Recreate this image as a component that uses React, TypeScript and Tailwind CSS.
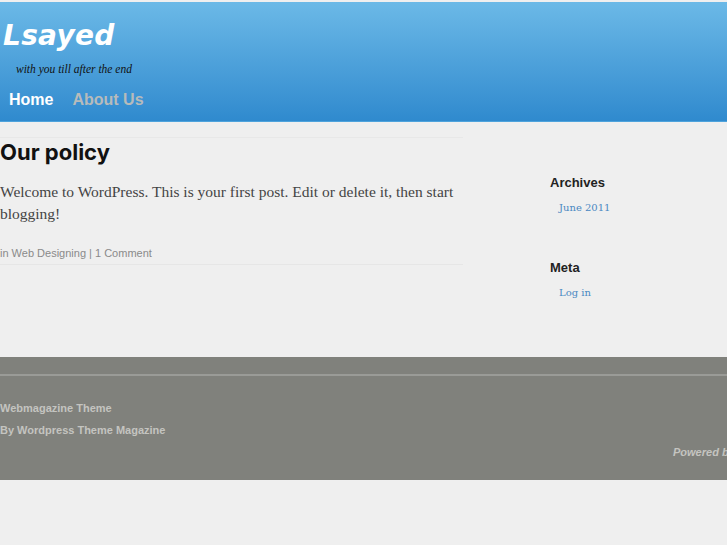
import React from 'react';

const sans = { fontFamily: '"Liberation Sans", Arial, sans-serif' };

const App: React.FC = () => {
  return (
    <div className="min-h-[545px] bg-[#efefef] overflow-hidden font-['Liberation_Sans',Arial,sans-serif]">
      {/* Header */}
      <div className="pt-[2px]">
        <div className="h-[120px] bg-gradient-to-b from-[#6bb9e7] to-[#2f8ace] border-b border-[#4ea3dc] relative">
          <div className="pl-[3px] pt-[20px] leading-none">
            <h1 className="text-[28px] font-bold italic text-white tracking-[0.3px] font-['DejaVu_Sans',sans-serif]">Lsayed</h1>
          </div>
          <div className="pl-[16px] pt-[14px] text-[11.5px] italic text-[#111] font-['Liberation_Serif',serif] leading-none">
            with you till after the end
          </div>
          <nav className="flex gap-[19px] pl-[9px] pt-[16px] text-[16px] font-bold leading-none">
            <span className="text-white">Home</span>
            <span className="text-[#b7bbbb]">About Us</span>
          </nav>
        </div>
      </div>

      {/* Content */}
      <div className="flex mt-[15px]">
        <div className="w-[463px] border-t border-[#e8e8e8]">
          <h2 className="text-[22px] font-bold text-[#111] mt-[1px] leading-[26px] font-['Inter',sans-serif]">Our policy</h2>
          <p className="mt-[16px] text-[15.5px] leading-[22px] text-[#444] font-['Liberation_Serif',serif]">
            Welcome to WordPress. This is your first post. Edit or delete it, then start blogging!
          </p>
          <div className="mt-[20px] pb-[2px] text-[11px] text-[#8a8a8a] border-b border-[#e6e6e6]" style={sans}>
            in Web Designing | 1 Comment
          </div>
        </div>
        <div className="ml-[88px] pt-[38px]">
          <h3 className="-ml-px text-[13px] font-bold text-[#222] leading-4">Archives</h3>
          <div className="pl-[8px] mt-[9px] text-[10px] text-[#4a88c2] font-['DejaVu_Serif',serif]">June 2011</div>
          <h3 className="-ml-px mt-[45px] text-[13px] font-bold text-[#222] leading-4">Meta</h3>
          <div className="pl-[8px] mt-[9px] text-[10px] text-[#4a88c2] font-['DejaVu_Serif',serif]">Log in</div>
        </div>
      </div>

      {/* Footer */}
      <div className="mt-[57px] bg-[#80817c] h-[123px]">
        <div className="h-[19px] border-b-2 border-[#9a9b97]" />
        <div className="pt-[21px] text-[11px] font-bold text-[#c4c4c0] leading-[22px]">
          <div>Webmagazine Theme</div>
          <div>By Wordpress Theme Magazine</div>
          <div className="pl-[673px] whitespace-nowrap italic">Powered by WordPress</div>
        </div>
      </div>
    </div>
  );
};

export default App;
